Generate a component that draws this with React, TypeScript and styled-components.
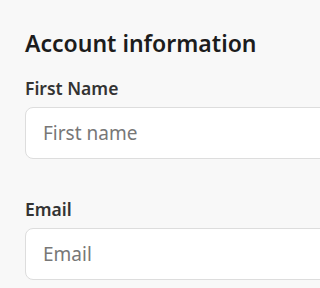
import React from 'react';
import styled, { createGlobalStyle } from 'styled-components';

const GlobalStyle = createGlobalStyle`
  html, body {
    margin: 0;
    padding: 0;
    background: #f8f8f8;
    overflow: hidden;
  }
  body {
    font-family: 'Noto Sans', 'Open Sans', sans-serif;
  }
`;

const Page = styled.div`
  width: 100vw;
  height: 100vh;
  overflow: hidden;
`;

const Form = styled.form`
  padding: 27px 0 0 25px;
  width: 420px;
`;

const Title = styled.h2`
  margin: 0 0 17px 0;
  font-size: 23px;
  line-height: 32px;
  font-weight: 600;
  color: #1c1c1c;
`;

const Field = styled.div`
  display: flex;
  flex-direction: column;
  gap: 7px;
  margin-bottom: 38px;
`;

const Label = styled.label`
  font-size: 17.5px;
  line-height: 24px;
  font-weight: 600;
  color: #333;
`;

const Input = styled.input`
  box-sizing: border-box;
  height: 52px;
  width: 100%;
  padding: 0 17px;
  border: 1px solid #dddddd;
  border-radius: 8px;
  background: #fff;
  font-family: inherit;
  font-size: 19px;
  color: #222;
  outline: none;

  &::placeholder {
    color: #777;
  }
`;

const App: React.FC = () => (
  <>
    <GlobalStyle />
    <Page>
      <Form>
        <Title>Account information</Title>
        <Field>
          <Label htmlFor="firstName">First Name</Label>
          <Input id="firstName" placeholder="First name" />
        </Field>
        <Field>
          <Label htmlFor="email">Email</Label>
          <Input id="email" type="email" placeholder="Email" />
        </Field>
      </Form>
    </Page>
  </>
);

export default App;
